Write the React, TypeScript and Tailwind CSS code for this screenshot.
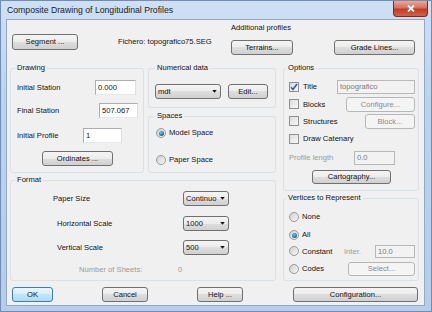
import React from 'react';

type Kids = { children?: React.ReactNode; className?: string };

const btnFace =
  'border-[#707070] bg-[linear-gradient(to_bottom,#f4f4f4,#ececec_50%,#dedede_50%,#d0d0d0)] text-[#111]';

const Btn: React.FC<Kids & { disabled?: boolean; primary?: boolean }> = ({
  children,
  className = '',
  disabled,
  primary,
}) => {
  const tone = disabled
    ? 'border-[#b5b8ba] bg-[#f4f4f4] text-[#8a8a8a]'
    : primary
    ? 'border-[#3c7fb1] bg-[linear-gradient(to_bottom,#e8f5fc,#d6eefb_50%,#c2e5f8_50%,#acdcf4)] text-[#111]'
    : btnFace;
  return (
    <div className={`flex shrink-0 items-center justify-center rounded-[3px] border ${tone} ${className}`}>
      {children}
    </div>
  );
};

const TextBox: React.FC<Kids & { disabled?: boolean }> = ({ children, className = '', disabled }) => (
  <div
    className={`flex shrink-0 items-center border px-[2px] ${
      disabled
        ? 'border-[#b8b8b8] bg-[#f2f2f2] text-[#7a7a7a]'
        : 'border-[#abadb3] border-r-[#dbdfe6] border-b-[#e3e9ef] bg-white text-[#111]'
    } ${className}`}
  >
    {children}
  </div>
);

const Combo: React.FC<Kids> = ({ children, className = '' }) => (
  <div className={`flex shrink-0 items-center rounded-[3px] border pl-[2px] pr-[3px] ${btnFace} ${className}`}>
    <span className="flex-1 whitespace-nowrap">{children}</span>
    <svg width="5" height="3" viewBox="0 0 6 4" className="shrink-0">
      <path d="M0 0h6L3 3.5z" fill="#111" />
    </svg>
  </div>
);

const Check: React.FC<{ checked?: boolean; label: string; className?: string }> = ({ checked, label, className = '' }) => (
  <div className={`flex shrink-0 items-center ${className}`}>
    <div className="flex h-[10px] w-[10px] items-center justify-center border border-[#8e8f8f] bg-[linear-gradient(135deg,#dcdcdc,#f8f8f8)]">
      {checked && (
        <svg width="8" height="8" viewBox="0 0 8 8">
          <path d="M1 4.2l2 2.3L7 1" stroke="#3a5aa8" strokeWidth="1.6" fill="none" />
        </svg>
      )}
    </div>
    <span className="ml-[4px]">{label}</span>
  </div>
);

const Radio: React.FC<{ on?: boolean; label: string; className?: string }> = ({ on, label, className = '' }) => (
  <div className={`flex shrink-0 items-center ${className}`}>
    <div className="flex h-[10px] w-[10px] items-center justify-center rounded-full border border-[#9a9a9a] bg-[linear-gradient(135deg,#cfcfcf,#f7f7f7)]">
      {on && <div className="h-[5px] w-[5px] rounded-full bg-[radial-gradient(circle_at_40%_35%,#6ad0f0,#1c5f86_70%)]" />}
    </div>
    <span className="ml-[3px]">{label}</span>
  </div>
);

const Group: React.FC<Kids & { title: string; legend: string }> = ({ title, legend, className = '', children }) => (
  <fieldset className={`shrink-0 rounded-[3px] border border-[#d9e1e6] ${className}`}>
    <legend className={`px-[2px] leading-[10px] ${legend}`}>{title}</legend>
    {children}
  </fieldset>
);

export default function App() {
  return (
    <div className="relative h-[312px] w-[432px] overflow-hidden border border-[#6f8db5] bg-[linear-gradient(to_bottom,#cfe0f4,#bcd3ee_30%,#b6cdea)] font-['Liberation_Sans',Arial,sans-serif] text-[7.6px] text-[#111]">
      {/* title bar */}
      <div className="flex h-[18px] items-start">
        <span className="ml-[6px] mt-[4px] text-[8.7px] leading-[11px] text-[#1a1a1a]">
          Composite Drawing of Longitudinal Profiles
        </span>
        <div className="ml-auto mr-[3px] flex h-[16px] w-[35px] items-center justify-center rounded-b-[4px] border border-t-0 border-[#7d2b23] bg-[linear-gradient(to_bottom,#e9a99b,#d6705f_45%,#c23a28_55%,#d4614a)]">
          <svg width="8" height="7" viewBox="0 0 8 7">
            <path d="M1 0.5l6 6M7 0.5l-6 6" stroke="#fff" strokeWidth="1.8" />
          </svg>
        </div>
      </div>

      {/* client area */}
      <div className="ml-[5px] h-[287px] w-[419px] border border-[#92a9c6] bg-[#f0f0f0]">
        <div className="flex h-[43px] items-start">
          <div className="mt-[14px] flex w-[224px] items-center">
            <Btn className="ml-[5px] h-[16px] w-[66px]">Segment ...</Btn>
            <span className="ml-[40px] whitespace-nowrap">Fichero: topografico75.SEG</span>
          </div>
          <div className="mt-[3px] flex flex-col">
            <span className="leading-[10px]">Additional profiles</span>
            <div className="mt-[7px] flex">
              <Btn className="h-[15px] w-[62px]">Terrains...</Btn>
              <Btn className="ml-[41px] h-[15px] w-[81px]">Grade Lines...</Btn>
            </div>
          </div>
        </div>

        <div className="flex">
          {/* left part */}
          <div className="ml-[3px] flex w-[266px] flex-col">
            <div className="flex">
              <Group title="Drawing" legend="ml-[4px]" className="h-[110px] w-[134px]">
                <div className="flex flex-col pl-[6px]">
                  <div className="mt-[7px] flex h-[15px] items-center">
                    <span className="w-[78px]">Initial Station</span>
                    <TextBox className="h-[15px] w-[41px]">0.000</TextBox>
                  </div>
                  <div className="mt-[8px] flex h-[15px] items-center">
                    <span className="w-[82px]">Final Station</span>
                    <TextBox className="h-[15px] w-[39px]">507.067</TextBox>
                  </div>
                  <div className="mt-[10px] flex h-[15px] items-center">
                    <span className="w-[66px]">Initial Profile</span>
                    <TextBox className="h-[15px] w-[39px]">1</TextBox>
                  </div>
                  <Btn className="ml-[25px] mt-[8px] h-[15px] w-[71px]">Ordinates ...</Btn>
                </div>
              </Group>
              <div className="ml-[4px] flex w-[128px] flex-col">
                <Group title="Numerical data" legend="ml-[6px]" className="h-[45px] w-[128px]">
                  <div className="mt-[11px] flex pl-[6px]">
                    <Combo className="h-[15px] w-[66px]">mdt</Combo>
                    <Btn className="ml-[7px] h-[15px] w-[40px]">Edit...</Btn>
                  </div>
                </Group>
                <Group title="Spaces" legend="ml-[6px]" className="mt-[3px] h-[62px] w-[128px]">
                  <div className="flex flex-col pl-[7px]">
                    <Radio on label="Model Space" className="mt-[6px] h-[12px]" />
                    <Radio label="Paper Space" className="mt-[15px] h-[12px]" />
                  </div>
                </Group>
              </div>
            </div>
            <Group title="Format" legend="ml-[4px]" className="mt-[2px] h-[106px] w-[266px]">
              <div className="flex flex-col">
                <div className="mt-[6px] flex h-[15px] items-center pl-[42px]">
                  <span className="w-[130px]">Paper Size</span>
                  <Combo className="h-[15px] w-[46px]">Continuo</Combo>
                </div>
                <div className="mt-[10px] flex h-[15px] items-center pl-[46px]">
                  <span className="w-[126px]">Horizontal Scale</span>
                  <Combo className="h-[15px] w-[46px]">1000</Combo>
                </div>
                <div className="mt-[9px] flex h-[15px] items-center pl-[46px]">
                  <span className="w-[126px]">Vertical Scale</span>
                  <Combo className="h-[15px] w-[46px]">500</Combo>
                </div>
                <div className="mt-[10px] flex h-[10px] items-center pl-[68px] text-[#9a9a9a]">
                  <span className="w-[99px]">Number of Sheets:</span>
                  <span>0</span>
                </div>
              </div>
            </Group>
          </div>

          {/* right part */}
          <div className="ml-[7px] flex w-[136px] flex-col">
            <Group title="Options" legend="ml-[2px]" className="h-[128px] w-[136px]">
              <div className="flex flex-col pl-[5px]">
                <div className="mt-[7px] flex h-[14px] items-center">
                  <Check checked label="Title" className="w-[48px]" />
                  <TextBox disabled className="h-[14px] w-[78px]">topografico</TextBox>
                </div>
                <div className="mt-[3px] flex h-[15px] items-center">
                  <Check label="Blocks" className="w-[57px]" />
                  <Btn disabled className="h-[15px] w-[69px]">Configure...</Btn>
                </div>
                <div className="mt-[2px] flex h-[15px] items-center">
                  <Check label="Structures" className="w-[76px]" />
                  <Btn disabled className="h-[15px] w-[50px]">Block...</Btn>
                </div>
                <Check label="Draw Catenary" className="mt-[5px] h-[10px]" />
                <div className="mt-[7px] flex h-[14px] items-center">
                  <span className="w-[65px] text-[#9a9a9a]">Profile length</span>
                  <TextBox disabled className="h-[14px] w-[41px]">0.0</TextBox>
                </div>
                <Btn className="ml-[23px] mt-[5px] h-[14px] w-[79px]">Cartography...</Btn>
              </div>
            </Group>
            <Group title="Vertices to Represent" legend="ml-[2px]" className="mt-[2px] h-[88px] w-[136px]">
              <div className="flex flex-col pl-[5px]">
                <Radio label="None" className="mt-[8px] h-[12px]" />
                <Radio on label="All" className="mt-[6px] h-[12px]" />
                <div className="mt-[4px] flex h-[13px] items-center">
                  <Radio label="Constant" className="w-[55px]" />
                  <span className="w-[31px] text-[#9a9a9a]">Inter.</span>
                  <TextBox disabled className="h-[13px] w-[40px]">10.0</TextBox>
                </div>
                <div className="mt-[4px] flex h-[14px] items-center">
                  <Radio label="Codes" className="w-[59px]" />
                  <Btn disabled className="h-[14px] w-[67px]">Select...</Btn>
                </div>
              </div>
            </Group>
          </div>
        </div>

        <div className="mt-[6px] flex">
          <Btn primary className="ml-[5px] h-[15px] w-[41px]">OK</Btn>
          <Btn className="ml-[49px] h-[15px] w-[46px]">Cancel</Btn>
          <Btn className="ml-[49px] h-[15px] w-[46px]">Help ...</Btn>
          <Btn className="ml-[50px] h-[15px] w-[125px]">Configuration...</Btn>
        </div>
      </div>
    </div>
  );
}
